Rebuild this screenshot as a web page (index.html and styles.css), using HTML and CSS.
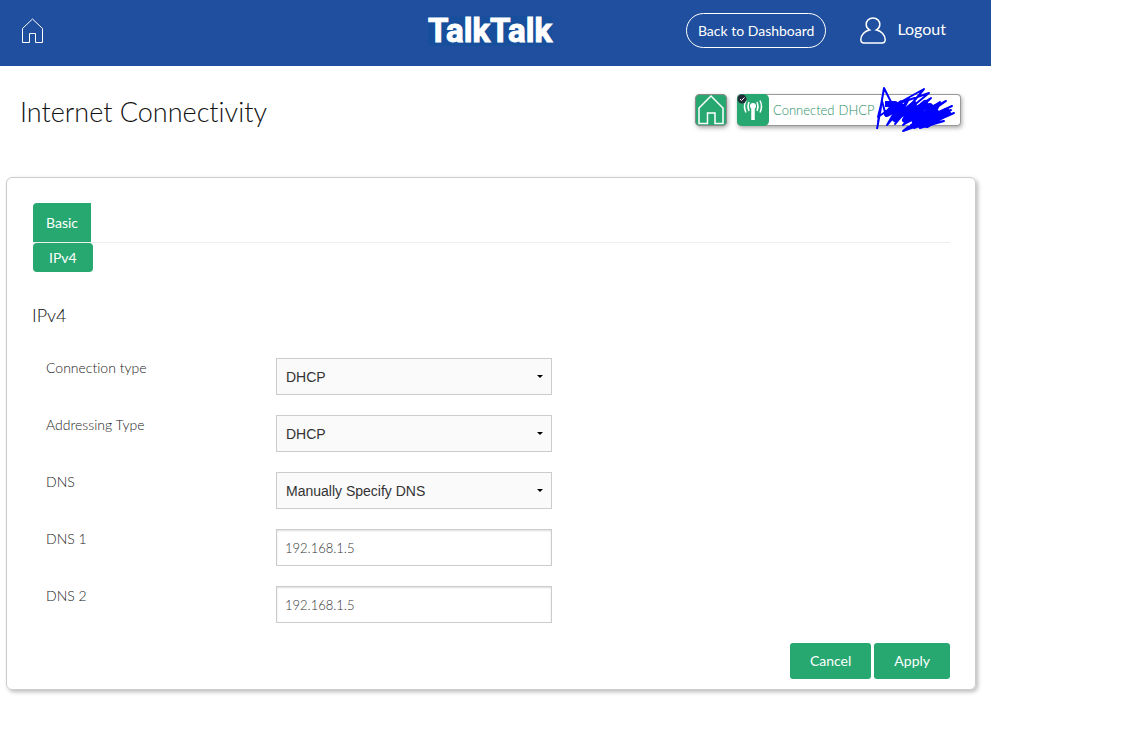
FILE: index.html
```
<!DOCTYPE html>
<html lang="en">
<head>
    <meta charset="UTF-8">
    <title>Internet Connectivity</title>
    <link rel="stylesheet" href="styles.css">
</head>
<body>
<div class="page">
    <header class="header">
        <a href="#" class="home" aria-label="Home">
            <svg width="23" height="26" viewBox="0 0 23 26"><path d="M1.500 10.500L11.500 1 21.500 10.500V24.500H14.500V15.500H8.500V24.500H1.500Z"/></svg>
        </a>
        <div class="logo">TalkTalk</div>
        <div class="header-right">
            <button type="button" class="dashboard">Back to Dashboard</button>
            <a href="#" class="logout">
                <svg width="26" height="27" viewBox="0 0 26 27"><path d="M9.500 13C4.500 14 1 18 .8 22.500C.8 25 2 26 4 26H22C24 26 25.200 25 25.200 22.500C25 18 21.500 14 16.500 13C18.600 11.800 19.800 10 19.800 7.500C19.800 3.800 17 1 13 1S6.200 3.800 6.200 7.500C6.200 10 7.400 11.800 9.500 13Z"/></svg>
                <span>Logout</span>
            </a>
        </div>
    </header>

    <div class="title-bar">
        <h1>Internet Connectivity</h1>
        <div class="status">
            <a href="#" class="status-home" aria-label="Home">
                <svg width="32" height="32" viewBox="0 0 32 32"><path d="M4 14L16 2 28 14V29.500H20V19H12.500V29.500H4Z"/></svg>
            </a>
            <div class="connection">
                <svg class="antenna" width="32" height="32" viewBox="0 0 32 32">
                    <circle cx="16" cy="12" r="3" fill="#fff" stroke="none"/>
                    <path d="M16 12V26" stroke-width="3.500"/>
                    <path d="M12 8Q10 12.500 12 17M20 8Q22 12.500 20 17M9 6.500Q6 12.500 9 18.500M23 6.500Q26 12.500 23 18.500"/>
                    <circle cx="5" cy="5" r="4.500" fill="#222c38" stroke="none"/>
                    <path d="M3 5L4.500 6.500 7.500 3.500" stroke-width="1"/>
                </svg>
                <span>Connected</span>
                <span>DHCP</span>
                <svg class="scribble" width="84" height="48" viewBox="0 0 84 48">
                    <path d="M2 43L6 21 3 36 8 8 9 2 14 12 20 23 11 30 7 15 3 31 26 15 12 39 34 13 20 38 49 3 22 18 54 7 21 34 56 12 28 39 65 16 31 37 71 15 34 41 77 20 36 39 76 24 39 42 79 27 45 42 69 35 33 41 28 45 64 32"/>
                    <path class="thick" d="M10 18L20 18 12 28 26 20 20 33 39 18 30 34 50 17 40 36 61 21 45 39 71 25 52 39 75 25"/>
                    <path class="thick" d="M34 24L55 20 64 29 50 36 36 32 52 29 59 33"/>
                </svg>
            </div>
        </div>
    </div>

    <main class="card">
        <nav class="tabs"><a href="#" class="tab">Basic</a></nav>
        <a href="#" class="sub-tab">IPv4</a>
        <h2>IPv4</h2>
        <form>
            <div class="row">
                <label for="connection-type">Connection type</label>
                <select id="connection-type"><option>DHCP</option></select>
            </div>
            <div class="row">
                <label for="addressing-type">Addressing Type</label>
                <select id="addressing-type"><option>DHCP</option></select>
            </div>
            <div class="row">
                <label for="dns">DNS</label>
                <select id="dns"><option>Manually Specify DNS</option></select>
            </div>
            <div class="row">
                <label for="dns1">DNS 1</label>
                <input type="text" id="dns1" value="192.168.1.5">
            </div>
            <div class="row">
                <label for="dns2">DNS 2</label>
                <input type="text" id="dns2" value="192.168.1.5">
            </div>
            <div class="buttons">
                <button type="button">Cancel</button>
                <button type="submit">Apply</button>
            </div>
        </form>
    </main>
</div>
</body>
</html>
```
FILE: styles.css
```
*{
    box-sizing: border-box;
    margin: 0;
    padding: 0;
}
body{
    background: #fff;
    color: #111;
    font-family: Lato, "Open Sans", sans-serif;
    font-size: 14px;
    font-variant-ligatures: none;
}
a{
    text-decoration: none;
    color: #fff;
}
svg{
    display: block;
    fill: none;
    stroke: #fff;
    stroke-width: 1.5;
}
button,input,select{
    font-family: inherit;
    font-size: 14px;
}
.page{
    max-width: 991px;
    padding-bottom: 20px;
}
/* header */
.header{
    display: grid;
    grid-template-columns: 44% auto 1fr;
    align-items: center;
    padding: 13px 45px 18px 21px;
    background: #1f4f9e;
}
.home svg{
    stroke-width: 1;
}
.logo{
    background: #174f9c;
    color: #fff;
    font-family: Roboto, sans-serif;
    font-size: 33px;
    font-weight: 700;
    line-height: 30px;
    -webkit-text-stroke: 1px #fff;
}
.header-right{
    display: flex;
    justify-content: flex-end;
    align-items: center;
    gap: 34px;
}
.dashboard{
    height: 35px;
    padding: 0 11px;
    border: 1px solid #fff;
    border-radius: 18px;
    background: none;
    color: #fff;
}
.logout{
    display: flex;
    align-items: center;
    gap: 11px;
    font-size: 16px;
}
.logout span{
    padding-bottom: 4px;
}
/* title and status */
.title-bar{
    display: flex;
    justify-content: space-between;
    align-items: center;
    height: 88px;
    padding: 0 30px 0 20px;
}
h1{
    padding-top: 2px;
    font-size: 27px;
    font-weight: 300;
}
.status{
    display: flex;
    gap: 10px;
}
.status-home{
    border-radius: 5px;
    background: #27a870;
    box-shadow: 1px 2px 4px #aaa, inset 0 0 0 1px #888;
}
.connection{
    display: flex;
    align-items: center;
    gap: 4px;
    position: relative;
    width: 224px;
    border-radius: 4px;
    box-shadow: 1px 2px 4px #aaa, inset 0 0 0 1px #999;
    color: #2a9065;
    font-size: 13px;
    font-weight: 300;
}
.antenna{
    border-radius: 5px;
    background: #27a870;
}
.scribble{
    position: absolute;
    right: 2px;
    top: -8px;
    stroke: #00f;
    stroke-width: 2;
    stroke-linejoin: round;
}
.scribble .thick{
    stroke-width: 6;
}
/* settings card */
.card{
    margin: 23px 15px 0 6px;
    padding: 25px 25px 10px 26px;
    border: 1px solid #ccc;
    border-radius: 6px;
    box-shadow: 2px 2px 4px #bbb;
}
.tabs{
    display: flex;
    border-bottom: 1px solid #eee;
}
.tab{
    padding: 0 13px;
    border-radius: 4px 0 0 0;
    background: #27a870;
    line-height: 39px;
}
.sub-tab{
    display: inline-block;
    padding: 0 16px;
    border-radius: 4px;
    background: #27a870;
    line-height: 29px;
}
h2{
    margin: 32px 0 32px -1px;
    font-size: 18px;
    font-weight: 300;
    line-height: 22px;
}
.row{
    display: grid;
    grid-template-columns: 230px minmax(0, 276px);
    margin-bottom: 20px;
    padding-left: 13px;
}
label{
    color: #222;
    font-weight: 300;
    line-height: 20px;
}
.row input,.row select{
    width: 100%;
    height: 37px;
    padding: 0 8px;
    border: 1px solid #ccc;
    background: #fff;
    color: #333;
}
.row input{
    box-shadow: inset 0 1px 2px #ddd;
    font-size: 13px;
    font-weight: 300;
}
.row select{
    appearance: none;
    padding: 0 9px;
    background: #fafafa url("data:image/svg+xml,%3Csvg xmlns='http://www.w3.org/2000/svg' width='6' height='3'%3E%3Cpath d='M0 0h6L3 3z'/%3E%3C/svg%3E") no-repeat right 8px center;
    font-family: "Liberation Sans", Arial, sans-serif;
}
.buttons{
    display: flex;
    justify-content: flex-end;
    gap: 3px;
}
.buttons button{
    height: 36px;
    padding: 0 20px 2px;
    border: none;
    border-radius: 3px;
    background: #27a870;
    color: #fff;
}
```
